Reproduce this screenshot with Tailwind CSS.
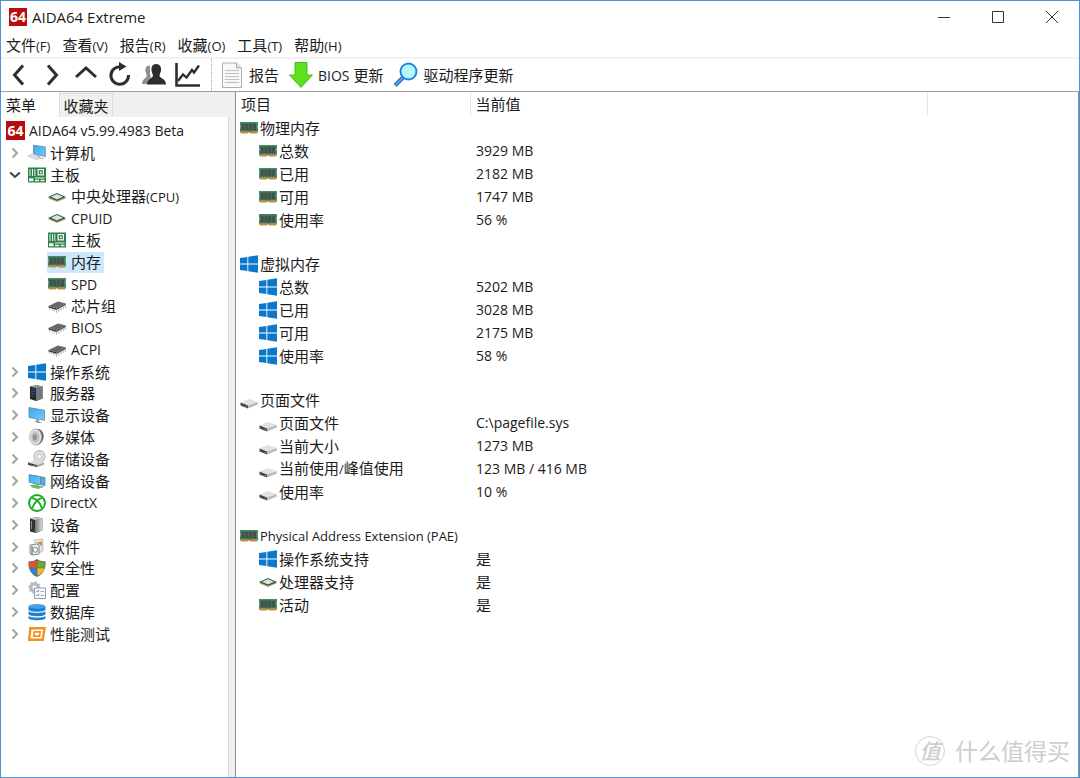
<!DOCTYPE html>
<html lang="zh-CN">
<head>
<meta charset="utf-8">
<title>AIDA64 Extreme</title>
<script src="https://cdn.jsdelivr.net/npm/@tailwindcss/browser@4"></script>
</head>
<body class="bg-white font-['Open_Sans','Noto_Sans_CJK_SC',sans-serif] text-[15px] leading-[22px] text-[#1c1c1c]">

<svg class="absolute size-0" aria-hidden="true">
  <defs>
    <linearGradient id="screen" x1="0" y1="0" x2="1" y2="1"><stop offset="0" stop-color="#35aaf0"/><stop offset="1" stop-color="#7cc8f5"/></linearGradient>
    <linearGradient id="metal" x1="0" y1="0" x2="1" y2="0"><stop offset="0" stop-color="#777"/><stop offset="1" stop-color="#ddd"/></linearGradient>
  </defs>
  <symbol id="ram" viewBox="0 0 18 18">
    <path d="M0 3h18v3.500l-.6 1 .6 1v5H0v-5l.6-1L0 6.500z" fill="#3f8f63"/>
    <path d="M1.500 4.500h3.300v7H1.500zM5.300 4.500h3.300v7H5.300zM9.100 4.500h3.300v7H9.100zM12.900 4.500h3.300v7h-3.300z" fill="#46504c"/>
    <path d="M1 12.300h7v2.200H1zM10 12.300h7v2.200h-7z" fill="#c98a3c"/>
  </symbol>
  <symbol id="win" viewBox="0 0 18 18"><path d="M0 3l7.400-1.100v6.700H0zM8.300 1.700L18 .3v8.300H8.300zM0 9.400h7.400v6.700L0 15zM8.300 9.400H18v8.300l-9.700-1.400z" fill="#0a78cc"/></symbol>
  <symbol id="drive" viewBox="0 0 18 18">
    <path d="M.5 11.500L9 8l8.700 2.800L8 14.600z" fill="#e2e2e2"/>
    <path d="M.5 11.500L8 14.400v3L.5 14.400z" fill="#444"/><path d="M8 14.500l9.700-3.600v2.600L8 17.400z" fill="#b8b8b8"/>
    <path d="M5.500 15l1.600.6v.9l-1.600-.6z" fill="#4fc04f"/>
  </symbol>
  <symbol id="cpu" viewBox="0 0 18 18">
    <path d="M0 10.300L9 6.800l9 3.500-9 3.700z" fill="#c0a468"/><path d="M0 9L9 5l9 4-9 3.800z" fill="#24553d"/><path d="M2.800 8.800L9 6l6.200 2.800L9 11.400z" fill="#d9e1da"/>
  </symbol>
  <symbol id="board" viewBox="0 0 18 18">
    <path d="M0 1.500h18v15H0z" fill="#2f8049"/>
    <path d="M1.500 3h1v7h-1zM4 3h1v7H4zM6.300 3h1v7h-1zM9.500 3H16v6.500H9.500zM1 12.300h4.500v3H1zM7 11.500h9.500v1H7zM7 13.800h4v1.500H7zM12.500 13.800h4v1.500h-4z" fill="#edf5ef"/>
    <path d="M10.800 4.200h4v4h-4z" fill="#2f8049"/><path d="M12 5.400h1.800v1.800H12z" fill="#edf5ef"/>
  </symbol>
  <symbol id="chip" viewBox="0 0 18 18">
    <path d="M.5 9L10 4.500l7.800 2-9.200 4.800z" fill="#686868"/><path d="M.5 9l8.100 2.300v1.600L.5 10.500z" fill="#3c3c3c"/><path d="M8.600 11.300L17.800 6.500v1.600l-9.200 4.800z" fill="#505050"/>
    <path d="M1.500 11v1.700M3.800 11.500v2M6 12.200v2.300M8.500 12.800v3M10.800 11.800v3M13 10.700v2.700M15.300 9.500v2.500M17.300 8.500V11" stroke="#9d9d9d" stroke-width=".8"/>
  </symbol>
  <symbol id="pc" viewBox="0 0 18 18">
    <path d="M5.500 1.200L17.300 3v9.500L5.500 9.800z" fill="url(#screen)" stroke="#447da8" stroke-width=".7"/>
    <path d="M9.500 10.700l2.500.6v2l2.500.7-1.800 1-5-1.200z" fill="#abb8c1"/><path d="M0 12.300l3.500-2 8.800 3-3 2.600z" fill="#dfe3e6" stroke="#a2aab0" stroke-width=".5"/><path d="M14 13.500l2.500.5-.8 1.400-2.400-.6z" fill="#c2c8cc"/>
  </symbol>
  <symbol id="server" viewBox="0 0 18 18">
    <path d="M2 2.500L8.500 1l6 1.500v12L8 17l-6-2z" fill="#25282c"/><path d="M8 4l6.500-1.500v12L8 17z" fill="#74797e"/><path d="M2 2.500L8.500 1l6 1.500L8 4z" fill="#9a9ea2"/><path d="M3 5.200h4M3 7.400h4M3 9.600h4M3 12h3" stroke="#195ca7" stroke-width=".9"/>
  </symbol>
  <symbol id="display" viewBox="0 0 18 18">
    <path d="M1 1.500l15.500 2.800v10L1 11.500z" fill="url(#screen)" stroke="#54809f" stroke-width=".7"/><path d="M8 13.300l3 .7v1.500l3 .9-2.800.9-5.200-1.500 2-.6z" fill="#8f9aa1"/>
  </symbol>
  <symbol id="speaker" viewBox="0 0 18 18">
    <path d="M8 1h3c3 1 4.700 4 4.700 7.500S13.500 15.500 10 17H7z" fill="#666b6e"/><ellipse cx="7.600" cy="9" rx="6" ry="8" fill="#e3e5e6" stroke="#9a9d9f" stroke-width=".7"/><ellipse cx="7.400" cy="9" rx="4.300" ry="6" fill="#c0c4c6"/><ellipse cx="6.800" cy="9.300" rx="2.200" ry="3" fill="#8d9295"/>
  </symbol>
  <symbol id="storage" viewBox="0 0 18 18">
    <ellipse cx="11.500" cy="6.500" rx="5.600" ry="6" fill="#dcdfe0" stroke="#9ea2a5" stroke-width=".8"/><ellipse cx="11.500" cy="6.500" rx="2" ry="2.200" fill="#fff" stroke="#a4a8aa" stroke-width=".6"/>
    <path d="M0 12.500l7-2.500 9 2.500-7 2.700z" fill="#ddd"/><path d="M0 12.500l9 2.600v2L0 15z" fill="#444"/><path d="M9 15.100l7-2.600v2.200l-7 2.600z" fill="#aaa"/><path d="M5.500 15l2 .6v.8l-2-.6z" fill="#4fc04f"/>
  </symbol>
  <symbol id="network" viewBox="0 0 18 18">
    <path d="M5.500 3.500L17 5.500v8L5.500 11.200z" fill="#4facdf" stroke="#54809f" stroke-width=".7"/><path d="M1 2.500l11.500 2.200v8L1 10.300z" fill="url(#screen)" stroke="#54809f" stroke-width=".7"/>
    <path d="M2 13l7-.5 5 2.500-3 2-7-1.500z" fill="#5fc35f"/><path d="M11 14.500l4-1 1 1.400-3 1z" fill="#9aa5ab"/>
  </symbol>
  <symbol id="dx" viewBox="0 0 18 18">
    <circle cx="9" cy="9" r="7.900" fill="none" stroke="#16ad20" stroke-width="2"/><path d="M4.200 14C5.300 10.800 7.500 8 9.300 6.500 11 8 13 11 13.800 14M4 4.500c2-.6 3.500.5 5.200 2C11 5 12.500 4 14 4.500" fill="none" stroke="#16ad20" stroke-width="1.800"/>
  </symbol>
  <symbol id="device" viewBox="0 0 18 18">
    <path d="M2 2.500L9 1l5.500 1.500V14L8 17l-6-1.500z" fill="#333"/><path d="M7 4l7.500-1.500V14L7 17z" fill="url(#metal)"/><path d="M2 2.500L9 1l5.500 1.500L7 4z" fill="#c9cbcc"/><path d="M3.500 5v8" stroke="#888"/><path d="M8.500 13.200l1.600-.3" stroke="#35c946" stroke-width="1.300"/>
  </symbol>
  <symbol id="software" viewBox="0 0 18 18">
    <path d="M6 2l9-1v12l-4 2z" fill="#dfe2e4" stroke="#a7abae" stroke-width=".6"/><path d="M8.500 4.500L14 3.500V8z" fill="#de8348"/><path d="M2 7l7-1 2 1.500V16l-7 1-2-1.500z" fill="#eceff0" stroke="#686e72" stroke-width=".8"/><circle cx="7.300" cy="11.800" r="2.400" fill="#fff" stroke="#5c8298" stroke-width=".9"/><path d="M4 8v8.500" stroke="#555"/>
  </symbol>
  <symbol id="shield" viewBox="0 0 18 18">
    <path d="M9 0C6.500 1.800 3.500 2.400.5 2.500 0 9.500 2.500 15 9 18c6.500-3 9-8.500 8.500-15.500C14.500 2.400 11.500 1.800 9 0z" fill="#5b5f63"/>
    <path d="M8.700 1.300v7.400H1.400c-.2-1.700-.2-3.500-.1-5.300 3-.2 5.200-.8 7.400-2.100z" fill="#e8512b"/><path d="M9.300 1.300v7.400h7.300c.2-1.700.2-3.500.1-5.300-3-.2-5.200-.8-7.400-2.100z" fill="#69ad2c"/><path d="M8.700 9.300v7.500c-4-2-6.500-4.500-7.200-7.500z" fill="#2486d8"/><path d="M9.300 9.300v7.500c4-2 6.500-4.500 7.200-7.500z" fill="#f6b921"/>
  </symbol>
  <symbol id="config" viewBox="0 0 18 18">
    <circle cx="6.500" cy="6.500" r="5.200" fill="#b5bcc2" stroke="#b5bcc2" stroke-width="2" stroke-dasharray="2 2"/><circle cx="6.500" cy="6.500" r="2" fill="#fff"/>
    <path d="M6.500 7H17.500v10.500h-11z" fill="#f8f9fa" stroke="#8c949a" stroke-width=".9"/><path d="M8.500 10l1 1 1.500-2M8.500 14l1 1 1.500-2" stroke="#397fbf" fill="none"/><path d="M12.500 10.500H16M12.500 14.500H16" stroke="#aaa"/>
  </symbol>
  <symbol id="db" viewBox="0 0 18 18">
    <path d="M.5 3.500v3c0 3 17 3 17 0v-3z" fill="#1d80cf"/><ellipse cx="9" cy="3.400" rx="8.500" ry="2.300" fill="#49a2e4"/><path d="M.5 8c1 2.500 16 2.500 17 0v3c0 3-17 3-17 0zM.5 12.800c1 2.500 16 2.500 17 0v2.200c0 3-17 3-17 0z" fill="#1d80cf"/>
  </symbol>
  <symbol id="bench" viewBox="0 0 18 18">
    <path d="M2.300 3.300h14.200l-1.800 11.500H1.200z" fill="none" stroke="#f78f1e" stroke-width="2.400"/><path d="M6.500 6.800h5.700l-.7 4.400H5.800z" fill="none" stroke="#f78f1e" stroke-width="1.700"/>
  </symbol>
  <symbol id="closed" viewBox="0 0 12 12"><path d="M3.500 1.500L8 6l-4.500 4.500" fill="none" stroke="#a3a3a3" stroke-width="2"/></symbol>
  <symbol id="open" viewBox="0 0 12 12"><path d="M1.200 3.500L6 8l4.800-4.500" fill="none" stroke="#404040" stroke-width="2"/></symbol>
</svg>

<div class="relative flex min-h-screen flex-col border border-[#4a94d8]">
  <header class="flex h-8 items-center pl-2">
    <span class="flex size-[18px] items-center justify-center bg-[#b90d0d] text-[14px] font-bold text-white">64</span>
    <h1 class="ml-[5px] grow">AIDA64 Extreme</h1>
    <button aria-label="最小化" class="flex h-8 w-[54px] items-center justify-center"><svg class="size-3" viewBox="0 0 12 12"><path d="M0 6.500h12" stroke="#333"/></svg></button>
    <button aria-label="最大化" class="flex h-8 w-[54px] items-center justify-center"><svg class="size-3" viewBox="0 0 12 12"><path d="M.5.5h11v11H.5z" fill="none" stroke="#333"/></svg></button>
    <button aria-label="关闭" class="flex h-8 w-[54px] items-center justify-center"><svg class="size-3" viewBox="0 0 12 12"><path d="M0 0l12 12M12 0L0 12" stroke="#333"/></svg></button>
  </header>

  <nav class="flex h-[26px] items-center gap-3 border-b-2 border-[#f2f2f2] pl-[5px]">
    <button>文件<span class="text-[13px]">(F)</span></button>
    <button>查看<span class="text-[13px]">(V)</span></button>
    <button>报告<span class="text-[13px]">(R)</span></button>
    <button>收藏<span class="text-[13px]">(O)</span></button>
    <button>工具<span class="text-[13px]">(T)</span></button>
    <button>帮助<span class="text-[13px]">(H)</span></button>
  </nav>

  <div class="flex h-8 items-center pl-1">
    <div class="flex items-center gap-2">
      <button aria-label="后退"><svg class="size-[26px]" viewBox="0 0 26 26"><path d="M18 3.500L9.500 13l8.500 9.500" fill="none" stroke="#2d2d2d" stroke-width="3"/></svg></button>
      <button aria-label="前进"><svg class="size-[26px]" viewBox="0 0 26 26"><path d="M9 3.500L17.500 13 9 22.500" fill="none" stroke="#2d2d2d" stroke-width="3"/></svg></button>
      <button aria-label="向上"><svg class="size-[26px]" viewBox="0 0 26 26"><path d="M3 15l10-9 10 9" fill="none" stroke="#2d2d2d" stroke-width="3"/></svg></button>
      <button aria-label="刷新"><svg class="size-[26px]" viewBox="0 0 26 26"><path d="M13.500 4.700A8.800 8.800 0 1 0 21.500 13" fill="none" stroke="#2d2d2d" stroke-width="3"/><path d="M12 0l7.500 4.500L12 9z" fill="#2d2d2d"/></svg></button>
      <button aria-label="用户"><svg class="size-[26px]" viewBox="0 0 26 26"><path d="M9 3.500c-4 0-5 3-4.500 6 .3 2 1.200 3 1.300 4.500C5.500 16 1 17 1 22h5c0-3 2-5 4-6l-1-4z" fill="#8f8f8f"/><path d="M15 2c4 0 5.500 3 5 6.500-.3 2-1.300 3.500-1.500 5.500.5 2.500 6.500 2.500 6.500 8.500H6c0-6 5.500-6 6-8.500-.2-2-1.200-3.500-1.500-5.500C10 5 11.500 2 15 2z" fill="#2d2d2d"/></svg></button>
      <button aria-label="图表"><svg class="size-[26px]" viewBox="0 0 26 26"><path d="M1.500 1v22.500H25" fill="none" stroke="#2d2d2d" stroke-width="2.600"/><path d="M3 19l5-6.500 3.500 3L17 8l2 2.500L24 3.500" fill="none" stroke="#2d2d2d" stroke-width="2.300"/></svg></button>
    </div>
    <div class="mx-[10px] h-8 border-l border-dotted border-[#aaa]"></div>
    <button class="flex items-center gap-[7px]"><svg class="h-[26px] w-5" viewBox="0 0 20 26"><path d="M.5 1h14l5 5v19.500H.5z" fill="#f8f8f8" stroke="#b0b0b0"/><path d="M14.500 1v5h5" fill="#ddd" stroke="#b0b0b0"/><path d="M3 8.500h14M3 11.500h14M3 14.500h14M3 17.500h14M3 20.500h14" stroke="#c0c0c0"/></svg>报告</button>
    <button class="ml-[10px] flex items-center gap-[5px]"><svg class="h-[26px] w-6" viewBox="0 0 24 26"><path d="M6 .5h12V13h5.500L12 25.500.5 13H6z" fill="#5be21c" stroke="#4bba25"/></svg><span><span class="text-[14px]">BIOS</span> 更新</span></button>
    <button class="ml-[10px] flex items-center gap-[4px]"><svg class="size-[26px]" viewBox="0 0 26 26"><path d="M2 23.500l8-8" stroke="#2d6fc4" stroke-width="4"/><path d="M2 23.500l8-8" stroke="#65aaf0" stroke-width="1.500"/><circle cx="15.500" cy="9.500" r="8" fill="#b2f8ff" stroke="#2f7fd6" stroke-width="2"/></svg>驱动程序更新</button>
  </div>

  <div class="flex grow border-t border-[#a0a0a0] bg-[#f0f0f0]">
    <aside class="flex w-[228px] shrink-0 flex-col">
      <div role="tablist" class="flex h-[25px] items-end">
        <button role="tab" aria-selected="true" class="h-[25px] w-[58px] bg-white pl-[5px] text-left">菜单</button>
        <button role="tab" aria-selected="false" class="h-6 w-[54px] border border-b-0 border-[#dcdcdc]">收藏夹</button>
      </div>
      <div class="grow border-r border-[#dcdcdc] bg-white pt-[3px]">
        <ul id="tree" role="tree" class="grid h-[525px] auto-rows-fr"></ul>
      </div>
    </aside>
    <main class="ml-[6px] grow border-x border-[#8a8f98] bg-white">
      <table class="w-full table-fixed border-collapse text-left">
        <colgroup><col class="w-[234px]"><col class="w-[457px]"><col></colgroup>
        <thead><tr class="h-6">
          <th class="border-r border-[#e5e5e5] p-0 pl-[5px] font-normal">项目</th>
          <th class="border-r border-[#e5e5e5] p-0 pl-[5px] font-normal">当前值</th>
          <th class="p-0"></th>
        </tr></thead>
        <tbody id="rows"></tbody>
      </table>
    </main>
  </div>

  <div class="absolute bottom-[10px] right-[9px] flex items-center gap-[10px] leading-[32px] text-[#cdcdcd]">
    <span class="flex size-[30px] items-center justify-center rounded-full border border-[#d4d4d4] text-[21px] font-medium italic">值</span>
    <span class="text-[23px]">什么值得买</span>
  </div>
</div>

<script>
  // Latin runs are set smaller than the Chinese glyphs around them.
  const mix = s => /[^\x00-\x7e]/.test(s)
    ? s.replace(/[\x21-\x7e]+/g, m => `<span class="text-[13px]">${m}</span>`)
    : `<span class="${s.length > 20 ? 'text-[13px]' : 'text-[14px]'}">${s}</span>`;
  const icon = id => `<svg class="size-[18px] shrink-0" aria-hidden="true"><use href="#${id}"/></svg>`;

  const tree = [
    [1, 'pc', '计算机'], [1, 'board', '主板', true],
    [2, 'cpu', '中央处理器(CPU)'], [2, 'cpu', 'CPUID'], [2, 'board', '主板'], [2, 'ram', '内存'], [2, 'ram', 'SPD'],
    [2, 'chip', '芯片组'], [2, 'chip', 'BIOS'], [2, 'chip', 'ACPI'],
    [1, 'win', '操作系统'], [1, 'server', '服务器'], [1, 'display', '显示设备'], [1, 'speaker', '多媒体'],
    [1, 'storage', '存储设备'], [1, 'network', '网络设备'], [1, 'dx', 'DirectX'], [1, 'device', '设备'],
    [1, 'software', '软件'], [1, 'shield', '安全性'], [1, 'config', '配置'], [1, 'db', '数据库'], [1, 'bench', '性能测试']
  ];
  document.getElementById('tree').innerHTML =
    `<li role="treeitem" class="flex items-center gap-1 pl-[5px]"><span class="flex size-[19px] items-center justify-center bg-[#b90d0d] text-[14px] font-bold text-white">64</span><span class="text-[14px]">AIDA64 v5.99.4983 Beta</span></li>` +
    tree.map(([level, ic, label, open]) => level === 1
      ? `<li role="treeitem" class="flex items-center pl-2"><svg class="mr-[7px] size-3" aria-hidden="true"><use href="#${open ? 'open' : 'closed'}"/></svg>${icon(ic)}<span class="ml-1">${mix(label)}</span></li>`
      : `<li role="treeitem" class="flex items-center pl-[46px]"><span class="flex h-[21px] items-center gap-[5px] pl-[1px] pr-[3px] ${label === '内存' ? 'bg-[#cce8ff]' : ''}">${icon(ic)}<span>${mix(label)}</span></span></li>`
    ).join('');

  const groups = [
    ['ram', '物理内存', [['ram', '总数', '3929 MB'], ['ram', '已用', '2182 MB'], ['ram', '可用', '1747 MB'], ['ram', '使用率', '56 %']]],
    ['win', '虚拟内存', [['win', '总数', '5202 MB'], ['win', '已用', '3028 MB'], ['win', '可用', '2175 MB'], ['win', '使用率', '58 %']]],
    ['drive', '页面文件', [['drive', '页面文件', 'C:\\pagefile.sys'], ['drive', '当前大小', '1273 MB'], ['drive', '当前使用/峰值使用', '123 MB / 416 MB'], ['drive', '使用率', '10 %']]],
    ['ram', 'Physical Address Extension (PAE)', [['win', '操作系统支持', '是'], ['cpu', '处理器支持', '是'], ['ram', '活动', '是']]]
  ];
  document.getElementById('rows').innerHTML = groups.map(([ic, name, items]) =>
    `<tr class="h-[23px]"><td colspan="3" class="p-0 pl-1"><div class="flex items-center gap-[2px]">${icon(ic)}<span>${mix(name)}</span></div></td></tr>` +
    items.map(([i, label, value]) =>
      `<tr class="h-[23px]"><td class="p-0 pl-[23px]"><div class="flex items-center gap-[2px]">${icon(i)}<span>${mix(label)}</span></div></td><td class="p-0 pl-[6px]">${mix(value)}</td><td class="p-0"></td></tr>`
    ).join('')
  ).join('<tr class="h-[21px]"><td colspan="3" class="p-0"></td></tr>');
</script>
</body>
</html>
